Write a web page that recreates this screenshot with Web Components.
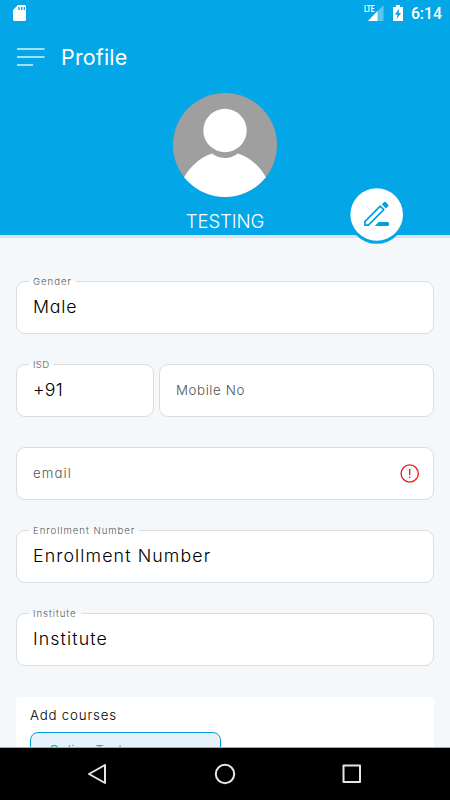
<!DOCTYPE html>
<html lang="en">
<head>
<meta charset="utf-8">
<title>Profile</title>
<style>
    body {
        margin: 0;
        font-family: Inter, "Open Sans", sans-serif;
        font-feature-settings: "cv11";
        font-weight: 300;
    }
</style>
</head>
<body>
<profile-screen>
    <status-bar slot="top" time="6:14"></status-bar>
    <profile-header slot="top" heading="Profile" name="TESTING"></profile-header>

    <text-field label="Gender" value="Male" style="--value-spacing: 0.8px"></text-field>
    <field-row>
        <text-field label="ISD" value="+91" style="--label-spacing: 0.3px; --value-spacing: 0.2px"></text-field>
        <text-field placeholder="Mobile No" style="--placeholder-spacing: 0.6px"></text-field>
    </field-row>
    <text-field placeholder="email" error></text-field>
    <text-field label="Enrollment Number" value="Enrollment Number"></text-field>
    <text-field label="Institute" value="Institute"></text-field>
    <course-card heading="Add courses">
        <course-chip>Online Test</course-chip>
    </course-card>

    <nav-bar slot="bottom"></nav-bar>
</profile-screen>

<script>
class ProfileScreen extends HTMLElement {
    constructor() {
        super();
        this.attachShadow({mode: 'open'});
        this.shadowRoot.innerHTML = `
            <style>
                :host {
                    display: flex;
                    flex-direction: column;
                    width: 450px;
                    height: 800px;
                    overflow: hidden;
                    background: #f4f8fb;
                }
                main {
                    flex: 1;
                    min-height: 0;
                    overflow: hidden;
                    display: flex;
                    flex-direction: column;
                    gap: 30px;
                    box-sizing: border-box;
                    padding: 46px 16px 0;
                    box-shadow: inset 0 3px 0 #dbe2e9;
                }
            </style>
            <slot name="top"></slot>
            <main><slot></slot></main>
            <slot name="bottom"></slot>
        `;
    }
}

class StatusBar extends HTMLElement {
    constructor() {
        super();
        this.attachShadow({mode: 'open'});
        this.shadowRoot.innerHTML = `
            <style>
                :host {
                    display: flex;
                    align-items: center;
                    flex: none;
                    height: 28px;
                    box-sizing: border-box;
                    padding: 0 8px 0 13px;
                    background: #03a6e7;
                    color: #fff;
                    font: 500 15.8px/28px Roboto, sans-serif;
                }
                svg {
                    display: block;
                    flex: none;
                }
                .card {
                    margin-right: auto;
                }
                .battery {
                    margin: 0 8px 0 9px;
                }
            </style>
            <svg class="card" width="13" height="28" fill="#fff">
                <path fill-rule="evenodd" d="M5 5h6.500Q13 5 13 6.500V19.500Q13 21 11.500 21H1.500Q0 21 0 19.500V10ZM5.200 7v3h1.400V7ZM8 7v3h1.400V7ZM10.700 7v3h1.300V7Z"/>
            </svg>
            <svg width="20" height="28" fill="#fff">
                <path fill-opacity=".35" d="M19.500 5v16H4Z"/>
                <path d="M13.500 11v10H4Z"/>
                <path fill="#03a6e7" d="M0 4h11v9H0Z"/>
                <text x="0" y="12.300" font-size="9.500" font-weight="700" textLength="10.500" lengthAdjust="spacingAndGlyphs">LTE</text>
            </svg>
            <svg class="battery" width="10" height="28">
                <path fill="#fff" d="M3 5h4v2h3v14H0V7h3Z"/>
                <path fill="#03a6e7" d="M6.200 8.500 1.800 14.500h2.600L3.600 19l4.500-6H5.600Z"/>
            </svg>
            <span></span>
        `;
    }

    connectedCallback() {
        this.shadowRoot.querySelector('span').textContent = this.getAttribute('time');
    }
}

class ProfileHeader extends HTMLElement {
    constructor() {
        super();
        this.attachShadow({mode: 'open'});
        this.shadowRoot.innerHTML = `
            <style>
                :host {
                    display: block;
                    position: relative;
                    flex: none;
                    height: 207px;
                    background: #03a6e7;
                    color: #fff;
                }
                .bar {
                    display: flex;
                    align-items: center;
                    gap: 16px;
                    height: 58px;
                    padding-left: 17px;
                }
                .bar svg {
                    display: block;
                }
                h1 {
                    margin: 0;
                    font-size: 21.5px;
                    font-weight: 400;
                    letter-spacing: 0.15px;
                }
                .user {
                    display: flex;
                    flex-direction: column;
                    align-items: center;
                    padding-top: 6.5px;
                }
                .name {
                    margin-top: 12.5px;
                    line-height: 24px;
                    font-size: 18.6px;
                    font-weight: 350;
                    letter-spacing: -0.1px;
                }
                /* edit button hangs over the lower edge */
                .edit {
                    position: absolute;
                    right: 44px;
                    bottom: -10px;
                }
            </style>
            <div class="bar">
                <svg width="28" height="20" fill="#fff" fill-opacity=".85">
                    <path d="M0 1.300h27.500v1.500H0ZM0 9.300h27.500v1.500H0ZM0 17.300h16v1.400H0Z"/>
                </svg>
                <h1></h1>
            </div>
            <div class="user">
                <svg width="104" height="104" viewBox="0 0 104 104">
                    <clipPath id="round"><circle cx="52" cy="52" r="52"/></clipPath>
                    <g clip-path="url(#round)">
                        <path fill="#9f9f9f" d="M0 0h104v104H0Z"/>
                        <path fill="#fff" d="M9 88C15 76 25 65 39 60.500Q52 69.500 65 60.500C79 65 89 76 95 88V104H9Z"/>
                        <circle cx="52" cy="37.500" r="21.700" fill="#fff"/>
                    </g>
                </svg>
                <span class="name"></span>
            </div>
            <svg class="edit" width="60" height="60" viewBox="0 0 60 60">
                <circle cx="30.700" cy="30.300" r="28.500" fill="#03a6e7"/>
                <circle cx="30.700" cy="29.500" r="26.300" fill="#fff"/>
                <path fill="none" stroke="#03a0df" stroke-width="1.700" stroke-linejoin="round" d="M18.900 40.200V36.700L34.200 21.200 37.800 24.700 22.400 40.200Z"/>
                <path fill="#03a0df" d="M35.800 19.200 38 17.200Q39 16.400 40 17.300L42 19.400Q43 20.500 42 21.500L40 23.500ZM28.800 41 32.600 37H41.500Q43.200 37.200 43.200 39T41.700 41Z"/>
            </svg>
        `;
    }

    connectedCallback() {
        this.shadowRoot.querySelector('h1').textContent = this.getAttribute('heading');
        this.shadowRoot.querySelector('.name').textContent = this.getAttribute('name');
    }
}

class FieldRow extends HTMLElement {
    constructor() {
        super();
        this.attachShadow({mode: 'open'});
        this.shadowRoot.innerHTML = `
            <style>
                :host {
                    display: grid;
                    grid-template-columns: 138px 1fr;
                    gap: 5px;
                }
            </style>
            <slot></slot>
        `;
    }
}

class TextField extends HTMLElement {
    constructor() {
        super();
        this.attachShadow({mode: 'open'});
        this.shadowRoot.innerHTML = `
            <style>
                :host {
                    display: flex;
                    align-items: center;
                    justify-content: space-between;
                    position: relative;
                    flex: none;
                    box-sizing: border-box;
                    height: 53px;
                    padding: 0 13px 0 16px;
                    border: 1px solid #dcdddf;
                    border-radius: 9px;
                    background: #fff;
                }
                /* the label sits in a notch of the top border */
                .label {
                    position: absolute;
                    left: 12px;
                    top: -7px;
                    padding: 0 4px;
                    line-height: 14px;
                    font-size: 9.6px;
                    letter-spacing: var(--label-spacing, 0.95px);
                    color: #555;
                    background: linear-gradient(transparent 6px, #fff 6px);
                }
                .text {
                    padding-bottom: 2px;
                }
                .value {
                    font-size: 17.8px;
                    letter-spacing: var(--value-spacing, 1.1px);
                    color: #000;
                }
                .placeholder {
                    font-size: 13.3px;
                    letter-spacing: var(--placeholder-spacing, 1.1px);
                    color: #555;
                }
                svg {
                    display: none;
                }
                :host([error]) svg {
                    display: block;
                }
            </style>
            <span class="label"></span>
            <span class="text"></span>
            <svg width="20" height="20" fill="none" stroke="#ea1414" stroke-width="1.300">
                <circle cx="9.700" cy="9.500" r="8.600"/>
                <path d="M9.700 5v6M9.700 12.500v1.500"/>
            </svg>
        `;
    }

    connectedCallback() {
        const label = this.shadowRoot.querySelector('.label');
        const text = this.shadowRoot.querySelector('.text');
        if (this.hasAttribute('label')) {
            label.textContent = this.getAttribute('label');
        } else {
            label.remove();
        }
        text.textContent = this.getAttribute('value') || this.getAttribute('placeholder');
        text.classList.add(this.hasAttribute('value') ? 'value' : 'placeholder');
    }
}

class CourseCard extends HTMLElement {
    constructor() {
        super();
        this.attachShadow({mode: 'open'});
        this.shadowRoot.innerHTML = `
            <style>
                :host {
                    display: block;
                    flex: none;
                    margin-top: 1px;
                    padding: 8px 14px 20px;
                    border-radius: 4px;
                    background: #fff;
                }
                h2 {
                    margin: 0 0 7px;
                    font-size: 13.3px;
                    line-height: 20px;
                    font-weight: 300;
                    letter-spacing: 0.8px;
                    color: #000;
                }
            </style>
            <h2></h2>
            <slot></slot>
        `;
    }

    connectedCallback() {
        this.shadowRoot.querySelector('h2').textContent = this.getAttribute('heading');
    }
}

class CourseChip extends HTMLElement {
    constructor() {
        super();
        this.attachShadow({mode: 'open'});
        this.shadowRoot.innerHTML = `
            <style>
                :host {
                    display: block;
                    box-sizing: border-box;
                    width: 191px;
                    height: 36px;
                    padding-left: 18px;
                    border: 1px solid #03a0df;
                    border-radius: 8px;
                    background: #e6f1fa;
                    color: #03a0df;
                    font-size: 13.3px;
                    line-height: 34px;
                    letter-spacing: 0.4px;
                }
            </style>
            <slot></slot>
        `;
    }
}

class NavBar extends HTMLElement {
    constructor() {
        super();
        this.attachShadow({mode: 'open'});
        this.shadowRoot.innerHTML = `
            <style>
                :host {
                    display: flex;
                    align-items: center;
                    justify-content: center;
                    gap: 103px;
                    flex: none;
                    box-sizing: border-box;
                    height: 53px;
                    border-top: 1px solid #a5a7a8;
                    background: #000;
                }
                svg {
                    fill: none;
                    stroke: #e6e6e6;
                    stroke-width: 2;
                    stroke-linejoin: round;
                }
            </style>
            <svg width="24" height="24"><path d="M19 3v18L3 12Z"/></svg>
            <svg width="24" height="24"><circle cx="12" cy="12" r="9.200"/></svg>
            <svg width="24" height="24"><path d="M3.500 3.500h16.500v16.500h-16.500Z"/></svg>
        `;
    }
}

customElements.define('profile-screen', ProfileScreen);
customElements.define('status-bar', StatusBar);
customElements.define('profile-header', ProfileHeader);
customElements.define('field-row', FieldRow);
customElements.define('text-field', TextField);
customElements.define('course-card', CourseCard);
customElements.define('course-chip', CourseChip);
customElements.define('nav-bar', NavBar);
</script>
</body>
</html>
